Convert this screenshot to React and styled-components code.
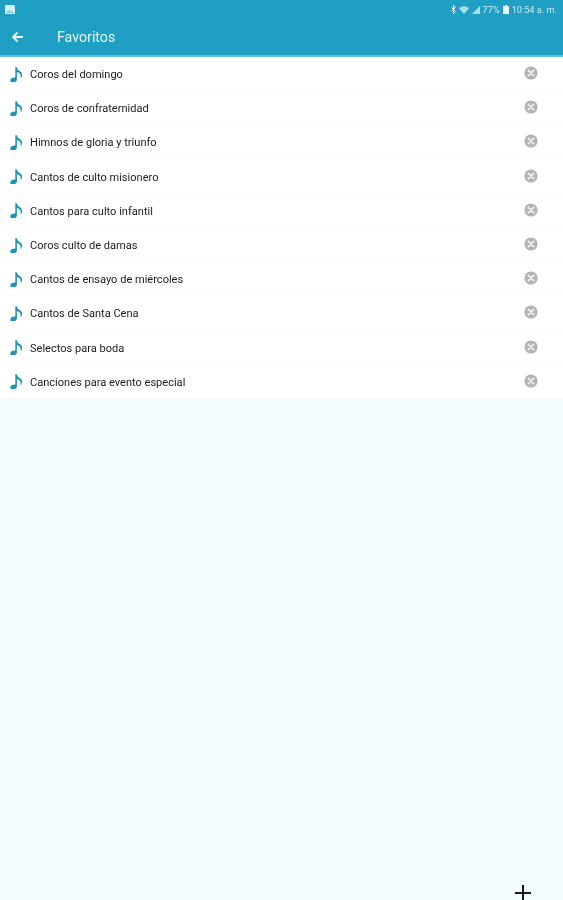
import React from "react";
import styled, { createGlobalStyle } from "styled-components";

const Global = createGlobalStyle`
  html, body { margin: 0; padding: 0; height: 100%; background: #f3fbfe; overflow: hidden; }
  #root { height: 100%; }
`;
const Page = styled.div`
  position: relative;
  width: 563px;
  height: 900px;
  overflow: hidden;
  display: flex;
  flex-direction: column;
  background: #f3fbfe;
  font-family: Roboto, "Liberation Sans", sans-serif;
`;
const Header = styled.header`
  height: 55px;
  flex: none;
  background: #1f9fc3;
  border-bottom: 2px solid #63c0da;
  display: flex;
  flex-direction: column;
  color: #e8f7fb;
`;
const StatusBar = styled.div`
  height: 19px;
  display: flex;
  align-items: center;
  justify-content: space-between;
  padding: 0 6px 0 5px;
`;
const StatusRight = styled.div`
  display: flex;
  align-items: center;
  gap: 3px;
  font-size: 9.2px;
  color: #cdecf4;
  filter: blur(0.45px);
`;
const TitleBar = styled.div`
  flex: 1;
  display: flex;
  align-items: center;
  padding: 0 0 0 11px;
  gap: 33px;
  filter: blur(0.35px);
`;
const Title = styled.h1`
  margin: 0;
  font-size: 14.2px;
  font-weight: 400;
  color: #e3f5fa;
`;
const List = styled.ul`
  margin: 0;
  padding: 0;
  list-style: none;
  background: #fff;
  flex: none;
`;
const Row = styled.li`
  height: 34.2px;
  box-sizing: border-box;
  display: flex;
  align-items: center;
  padding: 0 25px 0 10px;
  border-bottom: 1px solid #fbfbfb;
`;
const NoteSlot = styled.span`
  display: flex;
  filter: blur(0.35px);
`;
const Label = styled.span`
  flex: 1;
  margin-left: 6px;
  padding-top: 2px;
  font-size: 11.05px;
  color: #1c1c1c;
  filter: blur(0.4px);
`;
const CloseSlot = styled.span`
  display: flex;
  margin-bottom: 1px;
  filter: blur(0.45px);
`;
const Fab = styled.div`
  position: absolute;
  left: 515px;
  top: 885px;
  width: 16px;
  height: 16px;
  filter: blur(0.3px);
`;

const Note = () => (
  <svg width="14" height="16" viewBox="0 0 14 16" aria-hidden="true">
    <path d="M0.3 14.2c0-1.7 2.4-3 5-2.8V1.2h1.6c.2 2 1.5 3 3.2 4.1 2 1.4 2.6 3.4 1.2 6.4l-.9-.2c.6-1.9.1-3.3-1.1-4.2-.8-.6-1.5-1-2.4-1.3v7.6c0 1.6-2 2.9-4 2.9-1.6 0-2.6-.7-2.6-1.8z" fill="#1e93b8" />
  </svg>
);
const Close = () => (
  <svg width="14" height="14" viewBox="0 0 14 14" aria-hidden="true">
    <circle cx="7" cy="7" r="6.6" fill="#b4b4b4" />
    <path d="M4.4 4.4l5.2 5.2M9.6 4.4l-5.2 5.2" stroke="#f2f2f2" strokeWidth="1.7" strokeLinecap="round" />
  </svg>
);
const Back = () => (
  <svg width="13" height="12" viewBox="0 0 13 12" aria-hidden="true">
    <path d="M12 6H2M6.5 1.5L2 6l4.5 4.5" fill="none" stroke="#e8f7fb" strokeWidth="1.8" />
  </svg>
);
const Pic = () => (
  <svg width="10" height="9" viewBox="0 0 10 9" aria-hidden="true">
    <rect width="10" height="9" rx="1" fill="#cfeef6" />
    <path d="M1 8l3-3 2 2 1.5-1L9 8z" fill="#7fc8de" />
  </svg>
);
const Bt = () => (
  <svg width="5" height="9" viewBox="0 0 5 9" aria-hidden="true">
    <path d="M0.5 2.5l4 4-2 2V.5l2 2-4 4" fill="none" stroke="#e0f4f9" strokeWidth="1" />
  </svg>
);
const Wifi = () => (
  <svg width="10" height="8" viewBox="0 0 10 8" aria-hidden="true">
    <path d="M0 2.5C3 -.5 7 -.5 10 2.5L5 8z" fill="#a9deec" />
  </svg>
);
const Signal = () => (
  <svg width="8" height="8" viewBox="0 0 8 8" aria-hidden="true">
    <path d="M0 8L8 0v8z" fill="#a9deec" />
  </svg>
);
const Battery = () => (
  <svg width="6" height="9" viewBox="0 0 6 9" aria-hidden="true">
    <path d="M2 0h2v1h2v8H0V1h2z" fill="#e6f6fa" />
  </svg>
);
const Plus = () => (
  <svg width="16" height="16" viewBox="0 0 16 16" aria-hidden="true">
    <path d="M8 0v16M0 8h16" stroke="#1a1a1a" strokeWidth="2" />
  </svg>
);

const items = [
  "Coros del domingo",
  "Coros de confraternidad",
  "Himnos de gloria y triunfo",
  "Cantos de culto misionero",
  "Cantos para culto infantil",
  "Coros culto de damas",
  "Cantos de ensayo de miércoles",
  "Cantos de Santa Cena",
  "Selectos para boda",
  "Canciones para evento especial",
];

export default function App() {
  return (
    <Page>
      <Global />
      <Header>
        <StatusBar>
          <Pic />
          <StatusRight>
            <Bt />
            <Wifi />
            <Signal />
            <span>77%</span>
            <Battery />
            <span>10:54 a. m.</span>
          </StatusRight>
        </StatusBar>
        <TitleBar>
          <Back />
          <Title>Favoritos</Title>
        </TitleBar>
      </Header>
      <List>
        {items.map((t) => (
          <Row key={t}>
            <NoteSlot><Note /></NoteSlot>
            <Label>{t}</Label>
            <CloseSlot><Close /></CloseSlot>
          </Row>
        ))}
      </List>
      <Fab>
        <Plus />
      </Fab>
    </Page>
  );
}
